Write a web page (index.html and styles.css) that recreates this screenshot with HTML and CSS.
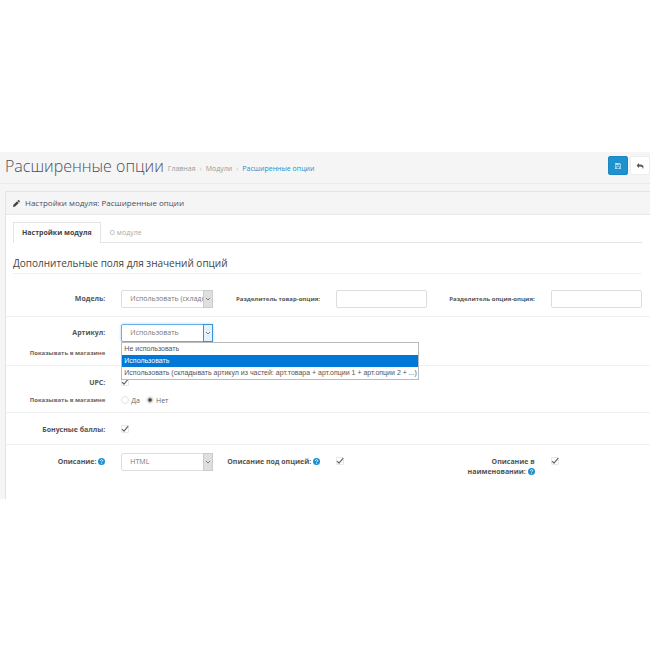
FILE: index.html
```html
<!DOCTYPE html>
<html lang="ru">
<head>
<meta charset="utf-8">
<title>Расширенные опции</title>
<link rel="stylesheet" href="styles.css">
</head>
<body>
<svg class="sprite" aria-hidden="true">
  <symbol id="chevron" viewBox="0 0 8 8"><path d="M2 3l2 2 2-2" fill="none" stroke="currentColor" stroke-width="0.8"/></symbol>
  <symbol id="check" viewBox="0 0 10 10"><path d="M2 5.200l2 2 4.200-5" fill="none" stroke="#666" stroke-width="1.200"/></symbol>
  <symbol id="help" viewBox="0 0 10 10"><circle cx="5" cy="5" r="5" fill="#1e91cf"/><path d="M3.400 3.900c0-2 3.300-2 3.300 0 0 1.200-1.600 1.100-1.600 2.300M5.100 7v1.200" fill="none" stroke="#fff" stroke-width="1.200"/></symbol>
</svg>
<main class="content">
  <header class="page-header">
    <h1 class="page-title">Расширенные опции</h1>
    <nav class="breadcrumb">
      <a href="#">Главная</a><span class="sep">›</span><a href="#">Модули</a><span class="sep">›</span><a href="#" class="current">Расширенные опции</a>
    </nav>
    <div class="actions">
      <button type="button" class="btn btn-primary" aria-label="Сохранить"><svg viewBox="0 0 12 12"><path fill="#d9edf9" fill-rule="evenodd" d="M0 0h9.500L12 2.500V12H0zM1.200 1.200v9.600h1.300V7h7v3.800h1.300V3L9 1.200V4.500H2.500V1.200zM5.500 1.200v2.300h1.800V1.200zM3.600 8v2.800h4.800V8z"/></svg></button>
      <button type="button" class="btn btn-default" aria-label="Назад"><svg viewBox="0 0 14 12"><path fill="#555" d="M5 0v2.800h2.500c4.500 0 6.500 2.200 6.500 5 0 1.700-.6 3-1.600 4.200.5-3.300-.8-5-4.900-5H5v2.800L0 4.900z"/></svg></button>
    </div>
  </header>
  <section class="panel">
    <h2 class="panel-heading"><svg viewBox="0 0 12 12"><path fill="#444" d="M0 12l.8-3.700L7 2.100 9.900 5 3.700 11.200zM7.700 1.400L8.800.3c.5-.4 1-.4 1.500 0l1.400 1.400c.4.500.4 1 0 1.500l-1.100 1.100z"/></svg>Настройки модуля: Расширенные опции</h2>
    <div class="panel-body">
      <nav class="tabs">
        <a href="#" class="tab active">Настройки модуля</a>
        <a href="#" class="tab">О модуле</a>
      </nav>
      <h3 class="section-title">Дополнительные поля для значений опций</h3>
      <form>
        <div class="row row-first">
          <label class="label" for="model">Модель:</label>
          <div class="field"><div class="select"><select id="model"><option>Использовать (складывать модель из частей)</option></select><span class="arrow"><svg><use href="#chevron"/></svg></span></div></div>
          <label class="label small" for="sep1">Разделитель товар-опция:</label>
          <div class="field"><input class="input" type="text" id="sep1"></div>
          <label class="label small" for="sep2">Разделитель опция-опция:</label>
          <div class="field"><input class="input" type="text" id="sep2"></div>
        </div>
        <div class="row row-open">
          <label class="label" for="sku">Артикул:</label>
          <div class="field">
            <div class="select focused"><select id="sku"><option>Использовать</option></select><span class="arrow"><svg><use href="#chevron"/></svg></span>
              <ul class="menu" role="listbox">
                <li role="option">Не использовать</li>
                <li role="option" class="selected" aria-selected="true">Использовать</li>
                <li role="option">Использовать (складывать артикул из частей: арт.товара + арт.опции 1 + арт.опции 2 + ...)</li>
              </ul>
            </div>
          </div>
          <span class="label small sub">Показывать в магазине</span>
        </div>
        <div class="row">
          <label class="label" for="upc">UPC:</label>
          <div class="field"><span class="check"><input type="checkbox" id="upc" checked><svg><use href="#check"/></svg></span></div>
          <span class="label small sub">Показывать в магазине</span>
          <div class="field radios">
            <label><input type="radio" name="show">Да</label>
            <label><input type="radio" name="show" checked>Нет</label>
          </div>
        </div>
        <div class="row">
          <label class="label" for="bonus">Бонусные баллы:</label>
          <div class="field"><span class="check"><input type="checkbox" id="bonus" checked><svg><use href="#check"/></svg></span></div>
        </div>
        <div class="row">
          <label class="label" for="desc">Описание: <svg class="help"><use href="#help"/></svg></label>
          <div class="field"><div class="select"><select id="desc"><option>HTML</option></select><span class="arrow"><svg><use href="#chevron"/></svg></span></div></div>
          <label class="label" for="under">Описание под опцией: <svg class="help"><use href="#help"/></svg></label>
          <div class="field"><span class="check"><input type="checkbox" id="under" checked><svg><use href="#check"/></svg></span></div>
          <label class="label" for="inname">Описание в наименовании:&nbsp;<svg class="help"><use href="#help"/></svg></label>
          <div class="field"><span class="check"><input type="checkbox" id="inname" checked><svg><use href="#check"/></svg></span></div>
        </div>
      </form>
    </div>
  </section>
</main>
</body>
</html>
```
FILE: styles.css
```css
* { box-sizing: border-box; }
body {
  margin: 0;
  padding: 152px 0;
  background: #fff;
  color: #666;
  font: 7px/10px "Open Sans", "Noto Sans", sans-serif;
  overflow-x: hidden;
}
.sprite { display: none; }
a { color: inherit; text-decoration: none; }
h1, h2, h3, ul { margin: 0; padding: 0; font-weight: 400; }
.content { background: #f5f5f5; }

.page-header {
  display: flex;
  align-items: center;
  height: 32px;
  padding: 0 0 4px 5px;
  border-bottom: 1px solid #eaeaea;
}
.page-title { font-size: 16px; line-height: 24px; font-weight: 300; color: #4c4d5a; }
.breadcrumb { display: flex; gap: 4px; margin-left: 4px; padding-top: 6px; color: #999; }
.breadcrumb .sep { color: #bbb; }
.breadcrumb .current { color: #1e91cf; }
.actions { display: flex; gap: 2px; margin-left: auto; }
.btn {
  display: flex;
  align-items: center;
  justify-content: center;
  width: 20px;
  height: 19px;
  padding: 0;
  border: 1px solid #1978ab;
  border-radius: 2px;
}
.btn svg { width: 6px; height: 6px; }
.btn-primary { background: #1e91cf; border-color: #1b86c0; }
.btn-default { background: #fff; border-color: #eee; }
.btn-default svg { width: 8px; }

.panel { margin: 7px 0 0 5px; border: 1px solid #e4e4e4; border-width: 1px 0 0 1px; }
.panel-heading {
  display: flex;
  align-items: center;
  gap: 5px;
  height: 23px;
  padding-left: 7px;
  border-bottom: 1px solid #e8e8e8;
  font-size: 8px;
  color: #4c4d5a;
}
.panel-heading svg { width: 7px; height: 7px; }
.panel-body { background: #fff; padding: 7px 0 13px; }

.tabs { display: flex; margin: 0 8px 0 7px; border-bottom: 1px solid #e4e4e4; }
.tab { padding: 5px 8px 4px; color: #aaa; border: 1px solid transparent; border-bottom: 0; }
.tab.active {
  margin-bottom: -1px;
  padding-bottom: 5px;
  background: #fff;
  border-color: #e4e4e4;
  color: #444;
  font-weight: 700;
}
.section-title {
  margin: 13px 8px 0 7px;
  padding-bottom: 3px;
  border-bottom: 1px solid #f1f1f1;
  font-size: 10px;
  line-height: 14px;
  color: #444;
}

.row {
  display: grid;
  grid-template-columns: repeat(6, 1fr);
  padding: 8px 0 5px;
  border-top: 1px solid #f0f0f0;
}
.row.row-first { padding: 16px 0 8px; border-top: 0; }
.row.row-open { row-gap: 3px; padding-top: 7px; }
.label { padding: 4px 8px 4px 0; text-align: right; font-weight: 700; color: #555; }
.label.small { font-size: 6px; }
.label.sub { grid-column: 1; padding-top: 3px; padding-bottom: 2px; color: #666; }
.help { width: 7px; height: 7px; vertical-align: -1px; }
.field { min-width: 0; height: 18px; padding: 0 8px; }

.input, select {
  display: block;
  width: 100%;
  height: 18px;
  margin: 0;
  border: 1px solid #ddd;
  border-radius: 2px;
  background: #fff;
  color: #777;
  font: inherit;
}
.select { position: relative; }
select { appearance: none; padding: 0 0 0 8px; outline: 0; }
.arrow {
  position: absolute;
  inset: 0 0 0 auto;
  display: flex;
  align-items: center;
  width: 10px;
  border: 1px solid #ccc;
  background: #dfdfdf;
  color: #666;
  pointer-events: none;
}
.arrow svg { width: 8px; height: 8px; }
.focused select { border-color: #66afe9; box-shadow: 0 0 3px #a5d3f5; }
.focused .arrow { border-color: #3c92d8; background: #e5f1fb; }
.menu {
  position: absolute;
  top: 100%;
  left: 0;
  z-index: 1;
  border: 1px solid #bbb;
  background: #fff;
  list-style: none;
  font: 7px/12px "Liberation Sans", Arial, sans-serif;
  color: #555;
  white-space: nowrap;
}
.menu li { padding: 0 1px 0 2px; }
.menu .selected { background: #0078d7; color: #fff; }

.check { position: relative; display: block; width: 8px; height: 8px; margin-top: 4px; }
.check input {
  display: block;
  appearance: none;
  width: 8px;
  height: 8px;
  margin: 0;
  border: 1px solid #e8e8e8;
  border-radius: 1px;
}
.check svg { position: absolute; inset: -1px; width: 10px; height: 10px; pointer-events: none; }
.radios { display: flex; gap: 6px; height: 15px; }
.radios label { display: flex; align-items: center; gap: 2px; padding-top: 2px; }
.radios input {
  appearance: none;
  width: 8px;
  height: 8px;
  margin: 0 0 2px;
  border: 1px solid #e4e4e4;
  border-radius: 50%;
}
.radios input:checked { background: radial-gradient(#444 0 1px, #fff 3px); }
```
